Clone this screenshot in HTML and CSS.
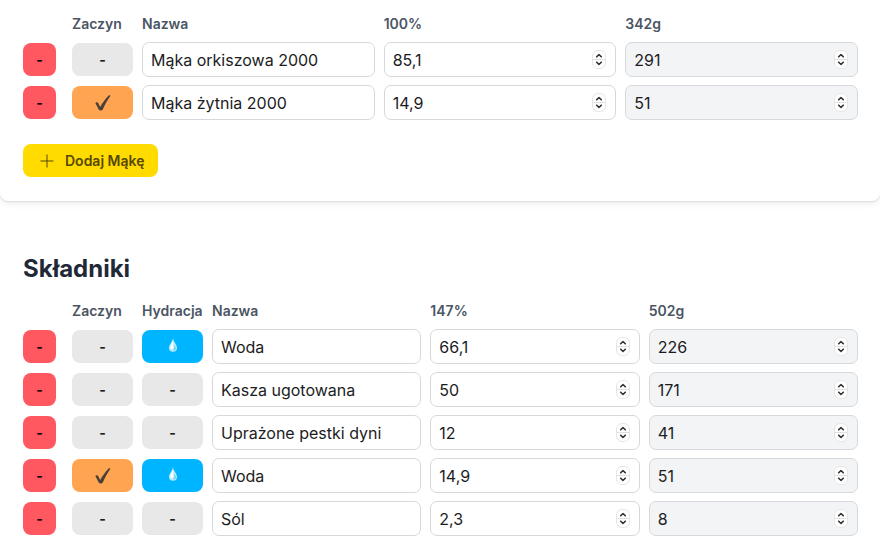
FILE: index.html
```html
<!DOCTYPE html>
<html lang="pl">
    <head>
        <meta charset="utf-8">
        <meta name="viewport" content="width=device-width, initial-scale=1">
        <title>Kalkulator chleba</title>
        <link rel="stylesheet" href="styles.css">
    </head>

    <body>
        <!-- shared icons -->
        <svg class="sprite" aria-hidden="true">
            <symbol id="up" viewBox="0 0 13 9"><path d="M3.8 6.6 6.5 4l2.7 2.6"/></symbol>
            <symbol id="down" viewBox="0 0 13 9"><path d="M3.8 2.4 6.5 5l2.7-2.6"/></symbol>
            <symbol id="plus" viewBox="0 0 14 14"><path d="M7 .5v13M.5 7h13"/></symbol>
            <symbol id="check" viewBox="0 0 16 16"><path d="M.5 8.400C.4 7.200 2.500 6.600 3.200 7.900c.7 1.300 1.200 2.700 2 4.100C7.200 8.200 10.300 4 13.400.8c.8-.8 2.300-.6 1.900.3C12.600 4.900 9.900 9.700 7.900 14.200c-.7 1.600-3.300 1.700-4.200.2C2.700 12.500 1.800 10.200.5 8.400z"/></symbol>
            <symbol id="drop" viewBox="0 0 10 14">
                <path fill="#b8ecfb" d="M5 0C4.600 3.800 1 6.700 1 9.800a4 4 0 0 0 8 0C9 6.700 5.400 3.800 5 0z"/>
                <path fill="#6fd0f2" d="M5.800 5c.5 2.500 2.100 3.600 2.100 5.200 0 1.400-1.100 2.400-2.600 2.400 1.200-2 1.200-4.600.5-7.600z"/>
                <path fill="#fff" d="M4.700 2.500C4.200 6 2.200 8 2.300 9.900c.1 1.300 1.800 1.700 2.500.8 1-1.400.5-5-.1-8.200z"/>
            </symbol>
        </svg>

        <section class="card">
            <div class="grid flours">
                <span class="head zaczyn">Zaczyn</span>
                <span class="head">Nazwa</span>
                <span class="head">100%</span>
                <span class="head">342g</span>

                <button class="btn remove" aria-label="Usuń">-</button>
                <button class="btn toggle" aria-label="Zaczyn">-</button>
                <input class="field" aria-label="Nazwa" value="Mąka orkiszowa 2000">
                <div class="field number">
                    <input inputmode="decimal" aria-label="Procent" value="85,1">
                    <div class="spin"><button aria-label="Więcej"><svg><use href="#up"/></svg></button><button aria-label="Mniej"><svg><use href="#down"/></svg></button></div>
                </div>
                <div class="field number gray">
                    <input inputmode="decimal" aria-label="Gramy" value="291" readonly>
                    <div class="spin"><button aria-label="Więcej"><svg><use href="#up"/></svg></button><button aria-label="Mniej"><svg><use href="#down"/></svg></button></div>
                </div>

                <button class="btn remove" aria-label="Usuń">-</button>
                <button class="btn toggle starter" aria-label="Zaczyn"><svg class="check"><use href="#check"/></svg></button>
                <input class="field" aria-label="Nazwa" value="Mąka żytnia 2000">
                <div class="field number">
                    <input inputmode="decimal" aria-label="Procent" value="14,9">
                    <div class="spin"><button aria-label="Więcej"><svg><use href="#up"/></svg></button><button aria-label="Mniej"><svg><use href="#down"/></svg></button></div>
                </div>
                <div class="field number gray">
                    <input inputmode="decimal" aria-label="Gramy" value="51" readonly>
                    <div class="spin"><button aria-label="Więcej"><svg><use href="#up"/></svg></button><button aria-label="Mniej"><svg><use href="#down"/></svg></button></div>
                </div>
            </div>
            <button class="btn add"><svg class="plus"><use href="#plus"/></svg>Dodaj Mąkę</button>
        </section>

        <section class="ingredients">
            <h2>Składniki</h2>
            <div class="grid extras">
                <span class="head zaczyn">Zaczyn</span>
                <span class="head">Hydracja</span>
                <span class="head">Nazwa</span>
                <span class="head">147%</span>
                <span class="head">502g</span>

                <button class="btn remove" aria-label="Usuń">-</button>
                <button class="btn toggle" aria-label="Zaczyn">-</button>
                <button class="btn toggle water" aria-label="Hydracja"><svg class="drop"><use href="#drop"/></svg></button>
                <input class="field" aria-label="Nazwa" value="Woda">
                <div class="field number">
                    <input inputmode="decimal" aria-label="Procent" value="66,1">
                    <div class="spin"><button aria-label="Więcej"><svg><use href="#up"/></svg></button><button aria-label="Mniej"><svg><use href="#down"/></svg></button></div>
                </div>
                <div class="field number gray">
                    <input inputmode="decimal" aria-label="Gramy" value="226" readonly>
                    <div class="spin"><button aria-label="Więcej"><svg><use href="#up"/></svg></button><button aria-label="Mniej"><svg><use href="#down"/></svg></button></div>
                </div>

                <button class="btn remove" aria-label="Usuń">-</button>
                <button class="btn toggle" aria-label="Zaczyn">-</button>
                <button class="btn toggle" aria-label="Hydracja">-</button>
                <input class="field" aria-label="Nazwa" value="Kasza ugotowana">
                <div class="field number">
                    <input inputmode="decimal" aria-label="Procent" value="50">
                    <div class="spin"><button aria-label="Więcej"><svg><use href="#up"/></svg></button><button aria-label="Mniej"><svg><use href="#down"/></svg></button></div>
                </div>
                <div class="field number gray">
                    <input inputmode="decimal" aria-label="Gramy" value="171" readonly>
                    <div class="spin"><button aria-label="Więcej"><svg><use href="#up"/></svg></button><button aria-label="Mniej"><svg><use href="#down"/></svg></button></div>
                </div>

                <button class="btn remove" aria-label="Usuń">-</button>
                <button class="btn toggle" aria-label="Zaczyn">-</button>
                <button class="btn toggle" aria-label="Hydracja">-</button>
                <input class="field" aria-label="Nazwa" value="Uprażone pestki dyni">
                <div class="field number">
                    <input inputmode="decimal" aria-label="Procent" value="12">
                    <div class="spin"><button aria-label="Więcej"><svg><use href="#up"/></svg></button><button aria-label="Mniej"><svg><use href="#down"/></svg></button></div>
                </div>
                <div class="field number gray">
                    <input inputmode="decimal" aria-label="Gramy" value="41" readonly>
                    <div class="spin"><button aria-label="Więcej"><svg><use href="#up"/></svg></button><button aria-label="Mniej"><svg><use href="#down"/></svg></button></div>
                </div>

                <button class="btn remove" aria-label="Usuń">-</button>
                <button class="btn toggle starter" aria-label="Zaczyn"><svg class="check"><use href="#check"/></svg></button>
                <button class="btn toggle water" aria-label="Hydracja"><svg class="drop"><use href="#drop"/></svg></button>
                <input class="field" aria-label="Nazwa" value="Woda">
                <div class="field number">
                    <input inputmode="decimal" aria-label="Procent" value="14,9">
                    <div class="spin"><button aria-label="Więcej"><svg><use href="#up"/></svg></button><button aria-label="Mniej"><svg><use href="#down"/></svg></button></div>
                </div>
                <div class="field number gray">
                    <input inputmode="decimal" aria-label="Gramy" value="51" readonly>
                    <div class="spin"><button aria-label="Więcej"><svg><use href="#up"/></svg></button><button aria-label="Mniej"><svg><use href="#down"/></svg></button></div>
                </div>

                <button class="btn remove" aria-label="Usuń">-</button>
                <button class="btn toggle" aria-label="Zaczyn">-</button>
                <button class="btn toggle" aria-label="Hydracja">-</button>
                <input class="field" aria-label="Nazwa" value="Sól">
                <div class="field number">
                    <input inputmode="decimal" aria-label="Procent" value="2,3">
                    <div class="spin"><button aria-label="Więcej"><svg><use href="#up"/></svg></button><button aria-label="Mniej"><svg><use href="#down"/></svg></button></div>
                </div>
                <div class="field number gray">
                    <input inputmode="decimal" aria-label="Gramy" value="8" readonly>
                    <div class="spin"><button aria-label="Więcej"><svg><use href="#up"/></svg></button><button aria-label="Mniej"><svg><use href="#down"/></svg></button></div>
                </div>
            </div>
        </section>
    </body>
</html>
```

FILE: styles.css
```css
* {
 box-sizing: border-box;
}
body {
 margin: 0;
 background: #fff;
 color: #1f2937;
 font-family: Inter, "Liberation Sans", sans-serif;
 font-size: 16px;
}
button, input {
 font: inherit;
 color: inherit;
}
.sprite {
 display: none;
}
.card {
 padding: 14px 22px 24px 23px;
 border-radius: 0 0 8px 8px;
 box-shadow: 0 1px 2px rgba(0, 0, 0, .1), 0 2px 8px rgba(0, 0, 0, .08);
}
.ingredients {
 padding: 52px 22px 4px 23px;
}
h2 {
 margin: 0 0 16px;
 font-size: 24px;
 line-height: 32px;
 font-weight: 700;
}

.grid {
 display: grid;
 gap: 8px 9px;
 align-items: center;
}
.flours {
 grid-template-columns: 40px 61px repeat(3, 1fr);
}
.extras {
 grid-template-columns: 40px 61px 61px repeat(3, 1fr);
}
.head {
 font-size: 14px;
 line-height: 20px;
 font-weight: 600;
 color: #4b5563;
}
.zaczyn {
 grid-column: 2;
}

.btn {
 display: flex;
 align-items: center;
 justify-content: center;
 height: 33px;
 padding: 0;
 border: 0;
 border-radius: 8px;
 font-size: 14px;
 font-weight: 600;
 cursor: pointer;
}
.remove {
 width: 33px;
 background: #ff5861;
 color: #1a0405;
 font-weight: 700;
}
.toggle {
 background: #e8e8e8;
 color: #1f1f1f;
 font-weight: 700;
}
.starter {
 background: #ffa552;
}
.water {
 background: #00b5ff;
}
.add {
 gap: 11px;
 margin-top: 24px;
 padding: 0 13px 0 17px;
 background: #ffdb00;
 color: #554800;
}
.check {
 width: 16px;
 height: 16px;
 fill: #4b4037;
}
.drop {
 width: 10px;
 height: 14px;
 margin-bottom: 4px;
}
.plus {
 width: 14px;
 height: 14px;
 stroke: #554800;
}

.field {
 width: 100%;
 min-width: 0;
 height: 35px;
 padding: 0 9px 0 8px;
 border: 1px solid #d5d9dd;
 border-radius: 7px;
 background: #fff;
 color: #1c1c1e;
}
.number {
 display: flex;
 align-items: center;
}
.number input {
 flex: 1;
 min-width: 0;
 padding: 0;
 border: 0;
 outline: 0;
 background: none;
}
.gray {
 background: #f3f4f6;
}
.spin {
 width: 14px;
 border: 1px solid #e6e6e6;
 border-radius: 6px;
 background: #fff;
 overflow: hidden;
}
.spin button {
 display: block;
 width: 100%;
 height: 8px;
 padding: 0;
 border: 0;
 background: none;
}
.spin button:first-child {
 height: 9px;
 border-bottom: 1px solid #e0e0e0;
}
.spin svg {
 display: block;
 width: 100%;
 height: 8px;
 fill: none;
 stroke: #333;
 stroke-width: 1.6;
 stroke-linecap: round;
 stroke-linejoin: round;
}
```
